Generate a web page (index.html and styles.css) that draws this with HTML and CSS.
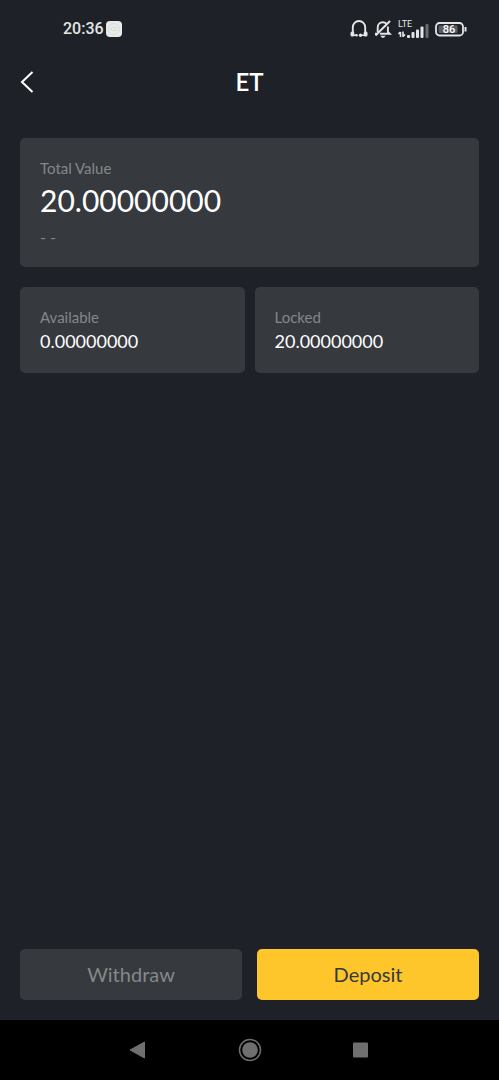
FILE: index.html
```
<!DOCTYPE html>
<html lang="en">
<head>
<meta charset="utf-8">
<meta name="viewport" content="width=device-width, initial-scale=1">
<title>ET</title>
<link rel="stylesheet" href="styles.css">
</head>
<body>
<div class="screen">
  <div class="status">
    <div class="status-group">
      <time class="clock">20:36</time>
      <svg class="icon" width="16" height="16" viewBox="0 0 16 16" aria-hidden="true">
        <rect width="16" height="16" rx="4" fill="#e9eaea"/>
        <circle cx="8" cy="8" r="5.5" fill="none" stroke="#dcdddd"/>
        <rect x="5.500" y="6.500" width="5" height="3" rx="1" fill="none" stroke="#d8d9d9"/>
      </svg>
    </div>
    <div class="status-group status-right">
      <svg class="icon" width="18" height="18" viewBox="0 0 18 18" aria-hidden="true">
        <path d="M2.800 13.500V7.500C2.800 3.700 5.500 1 9 1s6.200 2.700 6.200 6.500v6" fill="none" stroke="#e4e5e6" stroke-width="1.900"/>
        <path d="M3 15.200h3.500M11.500 15.200H15" stroke="#e4e5e6" stroke-width="1.600"/>
        <rect x="0.500" y="11.500" width="3.800" height="5" rx="1.500" fill="#e4e5e6"/>
        <rect x="13.700" y="11.500" width="3.800" height="5" rx="1.500" fill="#e4e5e6"/>
        <circle cx="6.500" cy="15.200" r="1.300" fill="#e4e5e6"/>
        <circle cx="10.500" cy="15.200" r="1.700" fill="#e4e5e6"/>
      </svg>
      <svg class="icon" width="18" height="18" viewBox="0 0 18 18" aria-hidden="true">
        <path d="M3.700 12V7.500C3.700 4.300 6 2.200 8.800 2.200c1.500 0 2.600.5 3.500 1.300M13.900 6.500v5.500l1.800 1.800H6M1 13.800h2.500" fill="none" stroke="#e4e5e6" stroke-width="1.900"/>
        <path d="M1.500 15.500L16 1" stroke="#e4e5e6" stroke-width="2"/>
        <path d="M6.300 15.800h5.400L10 17.800H8z" fill="#e4e5e6"/>
      </svg>
      <div class="signal">
        <span class="network">LTE</span>
        <svg class="bars" width="31" height="15" viewBox="0 0 31 15" aria-hidden="true">
          <path d="M2.500 14V9M0.500 11l2-2M5 8.500v5.500M5 13.500l2-2" fill="none" stroke="#e4e5e6" stroke-width="1.600"/>
          <g fill="#e4e5e6">
            <rect x="9" y="12" width="3" height="3" rx="1"/>
            <rect x="13.500" y="9" width="3" height="6" rx="1"/>
            <rect x="18" y="6.500" width="3" height="8.500" rx="1"/>
            <rect x="22.500" y="3.500" width="3" height="11.500" rx="1"/>
            <rect x="27.500" y="1" width="3" height="14" rx="1" fill="#6b6d71"/>
          </g>
        </svg>
      </div>
      <svg class="icon battery" width="32" height="16" viewBox="0 0 32 16" aria-label="Battery 86%">
        <rect x="1" y="2" width="27" height="12.500" rx="3.500" fill="none" stroke="#e4e5e6" stroke-width="1.800"/>
        <rect x="3.500" y="4.500" width="19" height="7.500" rx="1" fill="#5b5d62"/>
        <path d="M30.500 6v4.500" stroke="#e4e5e6" stroke-width="2"/>
        <text class="battery-level" x="14" y="12" text-anchor="middle">86</text>
      </svg>
    </div>
  </div>

  <header class="header">
    <button class="back" type="button" aria-label="Back">
      <svg class="icon" width="14" height="22" viewBox="0 0 14 22" aria-hidden="true">
        <path d="M12.500 1L2 11l10.500 10" fill="none" stroke="#fff" stroke-width="2"/>
      </svg>
    </button>
    <h1 class="title">ET</h1>
  </header>

  <main class="content">
    <section class="card card-total">
      <h2 class="label">Total Value</h2>
      <p class="total">20.00000000</p>
      <p class="fiat">- -</p>
    </section>
    <div class="pair">
      <section class="card">
        <h2 class="label">Available</h2>
        <p class="amount">0.00000000</p>
      </section>
      <section class="card">
        <h2 class="label">Locked</h2>
        <p class="amount">20.00000000</p>
      </section>
    </div>
  </main>

  <div class="actions">
    <button class="action action-muted" type="button">Withdraw</button>
    <button class="action action-primary" type="button">Deposit</button>
  </div>

  <nav class="system-nav" aria-label="System">
    <button class="nav-button" type="button" aria-label="Back">
      <svg class="icon" width="24" height="24" viewBox="0 0 24 24"><path d="M17.500 4v16L3 12z" fill="#6f6f6f" stroke="#6f6f6f" stroke-linejoin="round"/></svg>
    </button>
    <button class="nav-button" type="button" aria-label="Home">
      <svg class="icon" width="24" height="24" viewBox="0 0 24 24"><circle cx="12" cy="12" r="10.500" fill="none" stroke="#6f6f6f" stroke-width="1.500"/><circle cx="12" cy="12" r="7.800" fill="#6f6f6f"/></svg>
    </button>
    <button class="nav-button" type="button" aria-label="Recent apps">
      <svg class="icon" width="24" height="24" viewBox="0 0 24 24"><rect x="4" y="4.500" width="15" height="15" rx="1" fill="#6f6f6f"/></svg>
    </button>
  </nav>
</div>
</body>
</html>
```
FILE: styles.css
```
* {
  box-sizing: border-box;
}

body {
  margin: 0;
  background: #1e2127;
  color: #fff;
  font-family: Lato, "Liberation Sans", sans-serif;
}

h1, h2, p {
  margin: 0;
  font-weight: 400;
}

button {
  border: 0;
  padding: 0;
  background: none;
  color: inherit;
  font: inherit;
}

.icon {
  display: block;
  flex: none;
}

.screen {
  display: flex;
  flex-direction: column;
  min-height: 100vh;
}

.status {
  display: flex;
  align-items: center;
  justify-content: space-between;
  height: 58px;
  padding: 0 32px 0 63px;
  font-family: Roboto, sans-serif;
  color: #e4e5e6;
}

.status-group {
  display: flex;
  align-items: center;
  gap: 2px;
}

.status-right {
  gap: 6px;
}

.clock {
  font-size: 16px;
  font-weight: 500;
  line-height: 20px;
}

.signal {
  display: grid;
  width: 31px;
  height: 18px;
}

.signal > * {
  grid-area: 1 / 1;
}

.network {
  font-size: 9px;
  line-height: 9px;
}

.bars {
  align-self: end;
}

.battery-level {
  fill: #fff;
  font-size: 11px;
  font-weight: 500;
}

.header {
  display: grid;
  grid-template-columns: 48px 1fr 48px;
  align-items: center;
  height: 48px;
}

.back {
  display: flex;
  align-items: center;
  height: 48px;
  padding-left: 20px;
}

.title {
  font-size: 24px;
  font-weight: 600;
  line-height: 32px;
  text-align: center;
}

.content {
  display: flex;
  flex: 1;
  flex-direction: column;
  gap: 20px;
  padding: 32px 20px;
}

.card {
  padding: 20px;
  border-radius: 5px;
  background: #36393e;
}

.label {
  color: #85878a;
  font-size: 15px;
  line-height: 20px;
}

.total {
  margin-top: 2px;
  font-size: 30px;
  line-height: 40px;
}

.fiat {
  margin-top: 7px;
  color: #85878a;
  font-size: 16px;
  line-height: 20px;
}

.pair {
  display: grid;
  grid-template-columns: 1fr 1fr;
  gap: 10px;
}

.amount {
  margin-top: 2px;
  font-size: 18px;
  line-height: 24px;
}

.actions {
  display: grid;
  grid-template-columns: 1fr 1fr;
  gap: 15px;
  padding: 0 20px 20px;
}

.action {
  height: 51px;
  padding-bottom: 2px;
  border-radius: 5px;
  font-size: 20px;
}

.action-muted {
  background: #36393e;
  color: #85878a;
}

.action-primary {
  background: #ffc62c;
  color: #36393e;
}

.system-nav {
  display: flex;
  align-items: center;
  justify-content: center;
  gap: 87px;
  height: 60px;
  background: #000;
}
```
